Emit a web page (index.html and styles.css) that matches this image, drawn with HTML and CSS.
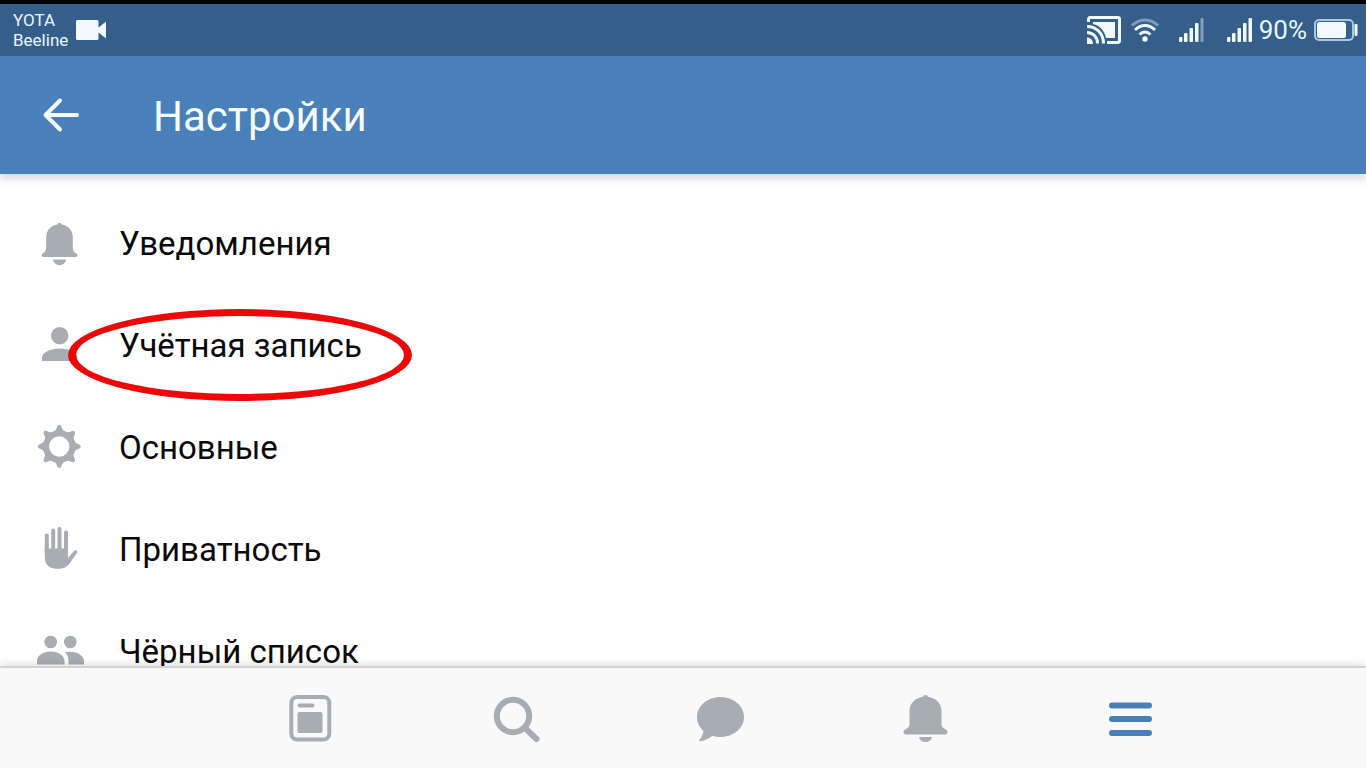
FILE: index.html
```html
<!DOCTYPE html>
<html lang="ru">
<head>
    <meta charset="UTF-8">
    <meta name="viewport" content="width=device-width, initial-scale=1.0">
    <title>Настройки</title>
    <link rel="stylesheet" href="styles.css">
</head>
<body>
    <div class="status">
        <div class="operators">
            <p>YOTA</p>
            <p>Beeline</p>
        </div>
        <svg class="camera" width="30" height="20" viewBox="0 0 30 20">
            <path d="M1.500 0h19.500a1.500 1.500 0 0 1 1.500 1.500v6L30 1.500v17l-7.500-6v6a1.500 1.500 0 0 1-1.500 1.500H1.500A1.500 1.500 0 0 1 0 18.500v-17A1.500 1.500 0 0 1 1.500 0z"/>
        </svg>
        <!-- трансляция -->
        <svg class="cast" width="34" height="28" viewBox="0 0 34 28">
            <path class="line" d="M1.500 6V3a1.500 1.500 0 0 1 1.500-1.500h28A1.500 1.500 0 0 1 32.500 3v22a1.500 1.500 0 0 1-1.500 1.500H20"/>
            <path d="M6 6h22v16H19C17.500 14.500 12.500 9.500 6 8z"/>
            <path class="line" d="M0 10.500c9.500 0 16.500 7 16.500 17M0 16.500c6 0 10.500 4.500 10.500 11"/>
            <path d="M0 21.500c3.500 0 6 2.500 6 6.500H0z"/>
        </svg>
        <!-- wi-fi -->
        <svg class="wifi" width="28" height="24" viewBox="0 0 28 24">
            <path class="line dim" d="M1 7.500C8.500 0 19.500 0 27 7.500"/>
            <path class="line" d="M4 12c6-6 14-6 20 0M8.500 16.500c3.500-3.500 7.500-3.500 11 0"/>
            <circle cx="14" cy="21" r="2.700"/>
        </svg>
        <svg class="signal" width="25" height="24" viewBox="0 0 25 24">
            <rect x="0" y="19" width="3.500" height="5" rx="1"/>
            <rect x="5" y="15" width="3.500" height="9" rx="1"/>
            <rect x="10.500" y="10" width="3.500" height="14" rx="1"/>
            <rect x="16" y="5" width="3.500" height="19" rx="1"/>
            <rect class="dim" x="21.500" y="0" width="3" height="24" rx="1"/>
        </svg>
        <svg class="signal last" width="25" height="24" viewBox="0 0 25 24">
            <rect x="0" y="19" width="3.500" height="5" rx="1"/>
            <rect x="5" y="15" width="3.500" height="9" rx="1"/>
            <rect x="10.500" y="10" width="3.500" height="14" rx="1"/>
            <rect x="16" y="5" width="3.500" height="19" rx="1"/>
            <rect x="21.500" y="0" width="3.500" height="24" rx="1"/>
        </svg>
        <span class="percent">90%</span>
        <svg class="battery" width="44" height="22" viewBox="0 0 44 22">
            <rect class="case" x="1" y="1" width="38" height="20" rx="4"/>
            <rect x="3" y="3" width="29" height="16" rx="2"/>
            <rect x="40.500" y="5" width="3" height="12" rx="1"/>
        </svg>
    </div>

    <header class="header">
        <button class="back" type="button" aria-label="Назад">
            <svg width="36" height="34" viewBox="0 0 36 34">
                <path d="M17 2.500L2.500 17 17 31.500M2.500 17H34"/>
            </svg>
        </button>
        <h1>Настройки</h1>
    </header>

    <main class="list">
        <a class="item" href="#">
            <svg class="icon" viewBox="0 0 48 48">
                <path d="M23.500 3c1.200 0 2 .6 2.300 1.500 6.500 1 11 6 11 12.500v10c0 3.500 1 5.200 3.500 6.500 1.800 1 1.500 3.500-.8 3.500h-32c-2.300 0-2.600-2.500-.8-3.500 2.500-1.300 3.500-3 3.500-6.500V17c0-6.500 4.500-11.500 11-12.500C21.500 3.600 22.300 3 23.500 3z"/>
                <path d="M17 39.500h13c-.5 3.500-3 5.500-6.500 5.500s-6-2-6.500-5.500z"/>
            </svg>
            <span>Уведомления</span>
        </a>
        <a class="item" href="#">
            <svg class="icon" viewBox="0 0 48 48">
                <circle cx="23.700" cy="13.700" r="8.700"/>
                <path d="M6 39v-3.500c0-5 8-9 17.700-9s17.700 4 17.700 9V39z"/>
            </svg>
            <span>Учётная запись</span>
            <i class="mark"></i>
        </a>
        <a class="item" href="#">
            <svg class="icon" viewBox="0 0 48 48">
                <defs>
                    <path id="tooth" d="M16.800 8C19.800 6.800 20.300 5 21.300 2.500c.7-1.900 3.300-1.900 4 0C26.300 5 26.800 6.800 29.800 8L28 12h-9.400z"/>
                </defs>
                <circle class="ring" cx="23.300" cy="22.500" r="13.200"/>
                <use href="#tooth"/>
                <use href="#tooth" transform="rotate(45 23.300 22.500)"/>
                <use href="#tooth" transform="rotate(90 23.300 22.500)"/>
                <use href="#tooth" transform="rotate(135 23.300 22.500)"/>
                <use href="#tooth" transform="rotate(180 23.300 22.500)"/>
                <use href="#tooth" transform="rotate(225 23.300 22.500)"/>
                <use href="#tooth" transform="rotate(270 23.300 22.500)"/>
                <use href="#tooth" transform="rotate(315 23.300 22.500)"/>
            </svg>
            <span>Основные</span>
        </a>
        <a class="item" href="#">
            <svg class="icon" viewBox="0 0 48 48">
                <path class="fingers" d="M10.800 9.500V28M17.200 4.500V28M23.500 3V28M30 6.500V28"/>
                <path d="M8.800 22.500h23.200v9.500l6-7c1.800-1.800 4.200-.2 3 1.800L33.500 37.500c-3 4-7 5.300-12.500 5.300-7.500 0-12.200-4.300-12.200-11.300z"/>
            </svg>
            <span>Приватность</span>
        </a>
        <a class="item" href="#">
            <svg class="icon" viewBox="0 0 48 48">
                <circle cx="14.700" cy="14" r="6.300"/>
                <circle cx="34.300" cy="14" r="6.300"/>
                <path d="M1 36.500V33c0-5 5.500-9.500 13.700-9.500S28.500 28 28.500 33v3.500z"/>
                <path d="M29 24.200c9.500-2.200 19 2.300 19 8.800v3.500H32.500V33c0-3.500-1.200-6.500-3.500-8.800z"/>
            </svg>
            <span>Чёрный список</span>
        </a>
    </main>

    <nav class="tabs">
        <a href="#" aria-label="Новости">
            <svg class="icon" viewBox="0 0 48 48">
                <rect class="frame" x="5.300" y="3" width="38" height="42.500" rx="6"/>
                <rect x="11.500" y="9.500" width="17" height="4" rx="2"/>
                <rect x="11.500" y="18" width="25" height="21" rx="2"/>
            </svg>
        </a>
        <a href="#" aria-label="Поиск">
            <svg class="icon" viewBox="0 0 48 48">
                <circle class="lens" cx="22" cy="22" r="16.200"/>
                <path class="lens" d="M34 34l11.500 11"/>
            </svg>
        </a>
        <a href="#" aria-label="Сообщения">
            <svg class="icon" viewBox="0 0 48 48">
                <path d="M24.500 3C37.500 3 48 12 48 23S37.500 43 24.500 43c-3 0-5.500-.3-8-1.200C13 44.500 9 46.800 4 47.200c-.9.100-1.200-.8-.6-1.400C5.500 43.500 7 40.500 7.500 37 3.500 33.500 1 28.500 1 23 1 12 11.500 3 24.500 3z"/>
            </svg>
        </a>
        <a href="#" aria-label="Уведомления">
            <svg class="icon" viewBox="0 0 48 48">
                <path d="M24.500 1c1.300 0 2.300.7 2.600 1.800C35 4 40.500 9.500 40.500 17v13c0 2.800 1.500 4 4 5.200 3.200 1.500 2.200 5.300-.5 5.300H5c-2.700 0-3.700-3.800-.5-5.300 2.500-1.200 4-2.400 4-5.200V17C8.500 9.500 14 4 21.900 2.800 22.200 1.700 23.200 1 24.500 1z"/>
                <path d="M18 43h13c-.7 3.300-3.200 5-6.500 5s-5.800-1.700-6.500-5z"/>
            </svg>
        </a>
        <a class="active" href="#" aria-label="Меню">
            <svg class="icon" viewBox="0 0 48 48">
                <path class="bars" d="M6 11.500h37M6 25h37M6 39h37"/>
            </svg>
        </a>
    </nav>
</body>
</html>
```
FILE: styles.css
```css
*{
    margin: 0;
    padding: 0;
    border: 0;
    box-sizing: border-box;
}
html{
    height: 100%;
}
body{
    height: 100%;
    display: flex;
    flex-direction: column;
    overflow: hidden;
    color: #0a0a0a;
    background-color: #fff;
    font-family: Roboto, "Noto Sans", sans-serif;
}
a{
    color: inherit;
    text-decoration: none;
}
svg{
    display: block;
    flex-shrink: 0;
    overflow: visible;
}

/* строка состояния */
.status{
    display: flex;
    align-items: center;
    flex-shrink: 0;
    height: 56px;
    padding: 0 8px 0 13px;
    border-top: 4px solid #000;
    color: #e8f6ff;
    background-color: #355f8a;
}
.status svg{
    fill: #f2faff;
}
.operators{
    font-size: 17px;
    line-height: 20px;
}
.camera{
    margin-left: 8px;
}
.cast{
    margin-left: auto;
}
.status .line{
    fill: none;
    stroke: #f2faff;
    stroke-width: 3;
}
.status .dim{
    opacity: .4;
}
.wifi{
    margin-left: 10px;
}
.signal{
    margin-left: 20px;
}
.last{
    margin-left: 23px;
}
.percent{
    margin: 0 7px;
    font-size: 26px;
    line-height: 30px;
}
.status .case{
    fill: none;
    stroke: #a9c8e2;
    stroke-width: 2;
}

/* шапка */
.header{
    display: flex;
    align-items: center;
    flex-shrink: 0;
    height: 118px;
    padding-left: 43px;
    color: #f5fcff;
    background-color: #4a80b9;
    box-shadow: 0 5px 8px rgba(40, 50, 80, 0.18);
    z-index: 1;
}
.back{
    background: none;
    cursor: pointer;
}
.back path{
    fill: none;
    stroke: #f5fcff;
    stroke-width: 4;
    stroke-linecap: round;
    stroke-linejoin: round;
}
.header h1{
    margin-left: 74px;
    padding-top: 4px;
    font-size: 42px;
    font-weight: 400;
    line-height: 50px;
}

/* список настроек */
.list{
    flex: 1;
    min-height: 0;
    padding-top: 19px;
    overflow: hidden;
}
.item{
    position: relative;
    display: flex;
    align-items: center;
    gap: 35px;
    height: 102px;
    padding-left: 36px;
    font-size: 33px;
    line-height: 40px;
}
.icon{
    width: 48px;
    height: 48px;
    fill: #a8adb1;
}
.ring{
    fill: none;
    stroke: #a8adb1;
    stroke-width: 6;
}
.fingers{
    fill: none;
    stroke: #a8adb1;
    stroke-width: 4;
    stroke-linecap: round;
}
.mark{
    position: absolute;
    left: 68px;
    top: 14px;
    width: 344px;
    height: 92px;
    border: solid #ec0808;
    border-width: 7px 8px;
    border-radius: 50%;
}

/* нижняя панель */
.tabs{
    display: grid;
    grid-template-columns: repeat(5, 1fr);
    align-items: center;
    justify-items: center;
    flex-shrink: 0;
    height: 102px;
    padding: 0 9.8% 0 15.2%;
    border-top: 2px solid #d3d3d3;
    background-color: #f9f9f9;
    box-shadow: 0 -2px 8px rgba(0, 0, 0, 0.12);
    z-index: 1;
}
.frame{
    fill: none;
    stroke: #a8adb1;
    stroke-width: 4;
}
.lens{
    fill: none;
    stroke: #a8adb1;
    stroke-width: 6;
    stroke-linecap: round;
}
.bars{
    fill: none;
    stroke: #4a80b9;
    stroke-width: 6;
    stroke-linecap: round;
}
```
